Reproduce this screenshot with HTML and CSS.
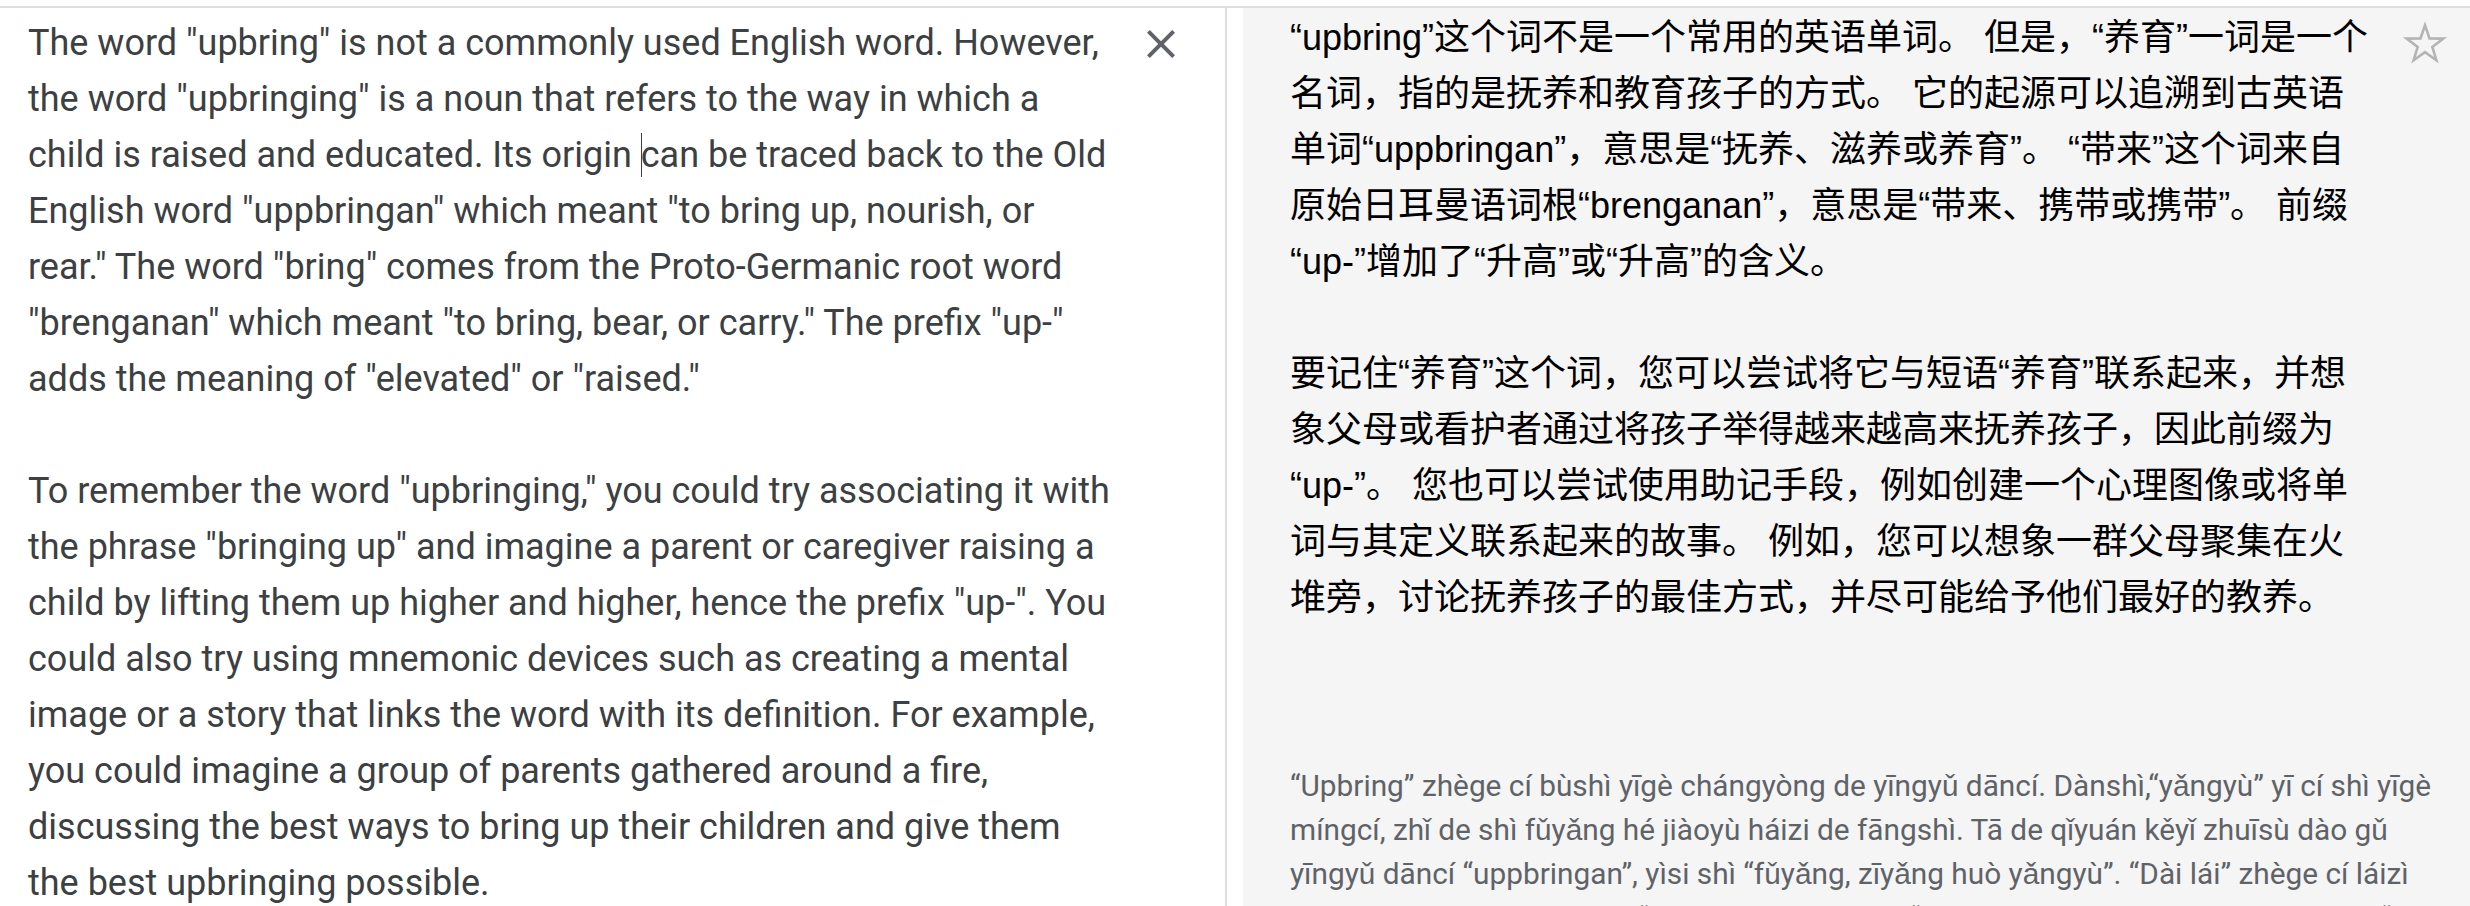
FILE: index.html
```html
<!DOCTYPE html>
<html lang="en">
<head>
<meta charset="utf-8">
<title>Translate</title>
<link rel="stylesheet" href="styles.css">
</head>
<body>
<div class="app">
  <section class="source">
    <div class="src-text">
      <p>The word "upbring" is not a commonly used English word. However, the word "upbringing" is a noun that refers to the way in which a child is raised and educated. Its origin <span class="caret"></span>can be traced back to the Old English word "uppbringan" which meant "to bring up, nourish, or rear." The word "bring" comes from the Proto-Germanic root word "brenganan" which meant "to bring, bear, or carry." The prefix "up-" adds the meaning of "elevated" or "raised."</p>
      <p>To remember the word "upbringing," you could try associating it with the phrase "bringing up" and imagine a parent or caregiver raising a child by lifting them up higher and higher, hence the prefix "up-". You could also try using mnemonic devices such as creating a mental image or a story that links the word with its definition. For example, you could imagine a group of parents gathered around a fire, discussing the best ways to bring up their children and give them the best upbringing possible.</p>
    </div>
    <button class="clear" aria-label="Clear source text">
      <svg viewBox="0 0 24 24" width="48" height="48"><path d="M19 6.41L17.59 5 12 10.59 6.41 5 5 6.41 10.59 12 5 17.59 6.41 19 12 13.41 17.59 19 19 17.59 13.41 12z"/></svg>
    </button>
  </section>
  <section class="target">
    <div class="tgt-text" lang="zh-CN">
      <p>“upbring”这个词不是一个常用的英语单词。 但是，“养育”一词是一个名词，指的是抚养和教育孩子的方式。 它的起源可以追溯到古英语单词“uppbringan”，意思是“抚养、滋养或养育”。 “带来”这个词来自原始日耳曼语词根“brenganan”，意思是“带来、携带或携带”。 前缀“up-”增加了“升高”或“升高”的含义。</p>
      <p>要记住“养育”这个词，您可以尝试将它与短语“养育”联系起来，并想象父母或看护者通过将孩子举得越来越高来抚养孩子，因此前缀为“up-”。 您也可以尝试使用助记手段，例如创建一个心理图像或将单词与其定义联系起来的故事。 例如，您可以想象一群父母聚集在火堆旁，讨论抚养孩子的最佳方式，并尽可能给予他们最好的教养。</p>
    </div>
    <button class="star" aria-label="Save translation">
      <svg viewBox="0 0 48 48" width="48" height="48"><polygon points="24,5.2 28.5,18.4 42.4,18.6 31.3,26.9 35.4,40.2 24,32.2 12.6,40.2 16.7,26.9 5.6,18.6 19.5,18.4"/></svg>
    </button>
    <div class="translit">“Upbring” zhège cí bùshì yīgè chángyòng de yīngyǔ dāncí. Dànshì,“yǎngyù” yī cí shì yīgè míngcí, zhǐ de shì fǔyǎng hé jiàoyù háizi de fāngshì. Tā de qǐyuán kěyǐ zhuīsù dào gǔ yīngyǔ dāncí “uppbringan”, yìsi shì “fǔyǎng, zīyǎng huò yǎngyù”. “Dài lái” zhège cí láizì yuánshǐ rì'ěrmàn yǔ cí gēn “brenganan”, yìsi shì “dài lái, xiédài huò xiédài”. Qiánzhuì “up-” zēngjiāle “shēng gāo” huò “shēng gāo” de hányì.</div>
  </section>
</div>
</body>
</html>
```

FILE: styles.css
```css
html, body {
  margin: 0;
  padding: 0;
  background: #ffffff;
}

body {
  height: 906px;
  overflow: hidden;
}

.app {
  margin-top: 6px;
  border-top: 2px solid #dedede;
  display: flex;
  height: 898px;
  overflow: hidden;
}

.source {
  position: relative;
  box-sizing: border-box;
  width: 1227px;
  flex: none;
  border-right: 2px solid #dedede;
  padding: 7px 113px 0 28px;
  background: #ffffff;
  overflow: hidden;
}

.src-text {
  font-family: Roboto, "Liberation Sans", sans-serif;
  font-size: 36px;
  line-height: 56px;
  color: #3c4043;
}

.src-text p,
.tgt-text p {
  margin: 0 0 56px 0;
}

.tgt-text p:last-child {
  margin-bottom: 0;
}

.caret {
  display: inline-block;
  width: 0;
  height: 44px;
  border-left: 1px solid #3c4043;
  vertical-align: -10px;
  margin-right: -1px;
}

.clear {
  position: absolute;
  top: 12px;
  left: 1137px;
  width: 48px;
  height: 48px;
  padding: 0;
  border: 0;
  background: transparent;
}

.clear svg {
  display: block;
  fill: #5f6368;
}

.target {
  position: relative;
  flex: 1;
  margin-left: 16px;
  background: #f5f5f5;
  padding: 2px 10px 0 47px;
  overflow: hidden;
}

.tgt-text {
  width: 1088px;
  font-family: "Liberation Sans", "Noto Sans CJK SC", sans-serif;
  font-size: 36px;
  line-height: 56px;
  color: #000000;
}

.star {
  position: absolute;
  top: 12px;
  left: 1158px;
  width: 48px;
  height: 48px;
  padding: 0;
  border: 0;
  background: transparent;
}

.star svg {
  display: block;
  fill: none;
  stroke: #b4b4b4;
  stroke-width: 2.6;
  stroke-linejoin: miter;
}

.translit {
  margin-top: 138px;
  font-family: Roboto, "Liberation Sans", sans-serif;
  font-size: 29.8px;
  line-height: 44px;
  color: #5f6368;
}
```
